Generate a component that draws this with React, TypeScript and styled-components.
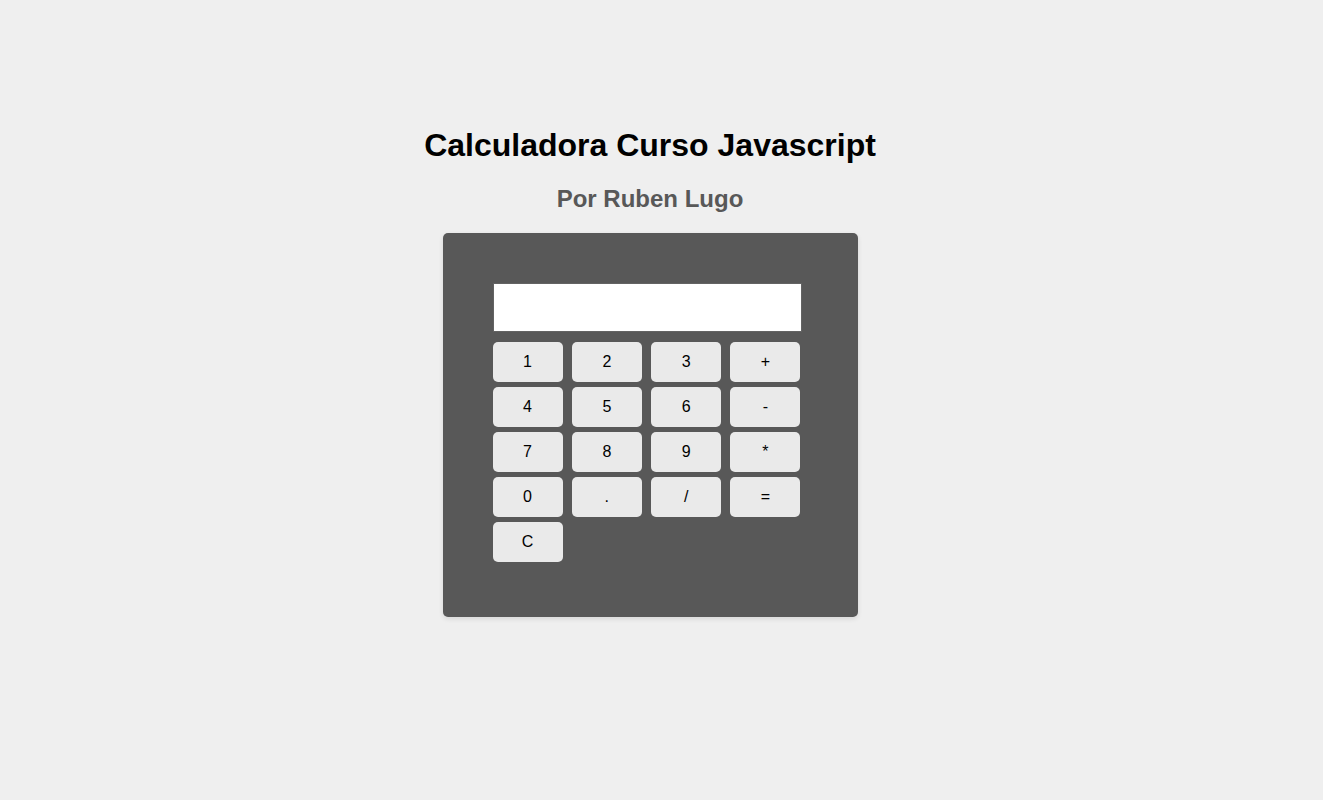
import React, { useState } from "react";
import styled, { createGlobalStyle } from "styled-components";

const GlobalStyle = createGlobalStyle`
  body {
    margin: 0;
    background: #efefef;
    font-family: "Liberation Sans", Arial, sans-serif;
  }
`;

const Page = styled.main`
  box-sizing: border-box;
  min-height: 100vh;
  padding: 127px 23px 40px 0;
  display: flex;
  flex-direction: column;
  align-items: center;
`;

const Title = styled.h1`
  margin: 0 0 21px;
  font-size: 32px;
  line-height: 37px;
  font-weight: bold;
  color: #000;
  text-align: center;
`;

const Author = styled.h2`
  margin: 0 0 20px;
  font-size: 24px;
  line-height: 28px;
  font-weight: bold;
  color: #585858;
  text-align: center;
`;

const Calculator = styled.section`
  box-sizing: border-box;
  width: 100%;
  max-width: 415px;
  padding: 50px 57px 55px 50px;
  border-radius: 5px;
  background: #585858;
  box-shadow: 0 2px 5px rgba(0, 0, 0, 0.1);
`;

const Display = styled.input`
  display: block;
  box-sizing: border-box;
  width: calc(100% + 1px);
  height: 49px;
  margin: 0 0 10px;
  padding: 0 10px;
  border: 1px solid #636363;
  background: #fff;
  font-family: inherit;
  font-size: 16px;
  text-align: right;
  outline: none;
`;

const Keys = styled.div`
  display: grid;
  grid-template-columns: repeat(4, 70px);
  justify-content: space-between;
  row-gap: 5px;
`;

const Key = styled.button`
  height: 40px;
  padding: 0;
  border: 0;
  border-radius: 5px;
  background: #eaeaea;
  color: #000;
  font-family: inherit;
  font-size: 16px;
  cursor: pointer;

  &:hover {
    background: #dcdcdc;
  }
`;

const keys = ["1", "2", "3", "+", "4", "5", "6", "-", "7", "8", "9", "*", "0", ".", "/", "=", "C"];

const apply = (a: number, op: string, b: number) =>
  op === "+" ? a + b : op === "-" ? a - b : op === "*" ? a * b : a / b;

function evaluate(text: string): string {
  const match = text.match(/^(-?[\d.]+)([-+*/])(-?[\d.]+)$/);
  if (!match) return text;
  return String(apply(Number(match[1]), match[2], Number(match[3])));
}

export default function App() {
  const [value, setValue] = useState("");

  const press = (key: string) => {
    if (key === "C") setValue("");
    else if (key === "=") setValue(evaluate(value));
    else setValue(value + key);
  };

  return (
    <>
      <GlobalStyle />
      <Page>
        <Title>Calculadora Curso Javascript</Title>
        <Author>Por Ruben Lugo</Author>
        <Calculator>
          <Display type="text" aria-label="Resultado" value={value} readOnly />
          <Keys>
            {keys.map((key) => (
              <Key key={key} type="button" onClick={() => press(key)}>
                {key}
              </Key>
            ))}
          </Keys>
        </Calculator>
      </Page>
    </>
  );
}
